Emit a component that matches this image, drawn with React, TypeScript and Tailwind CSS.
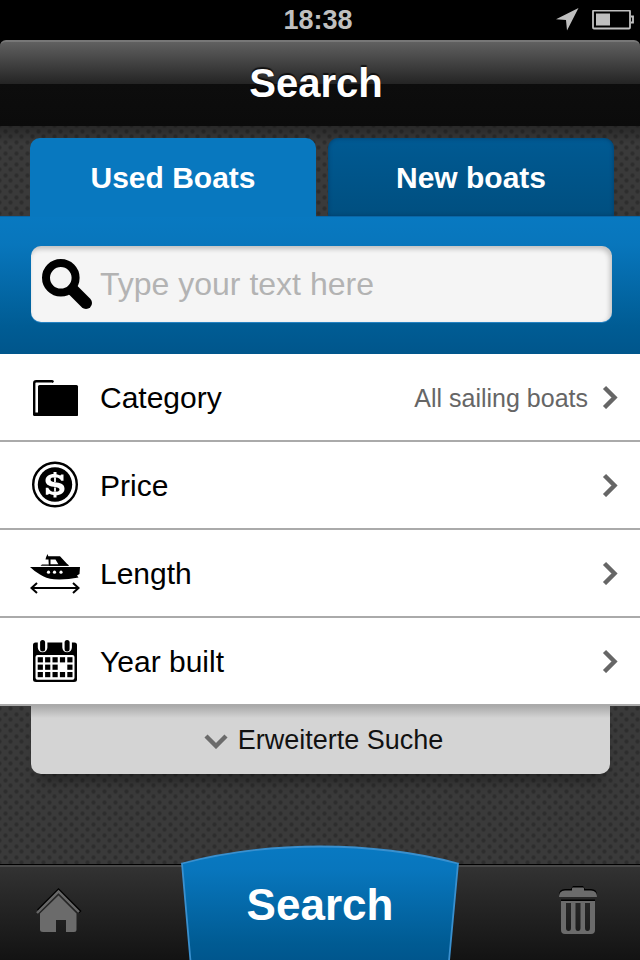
import React from "react";

function Chevron({ down = false }: { down?: boolean }) {
  return down ? (
    <svg className="h-4 w-6 shrink-0" viewBox="0 0 24 16" aria-hidden="true">
      <path d="M2 3 L12 13 L22 3" fill="none" stroke="#6b6b6b" strokeWidth="4.4" />
    </svg>
  ) : (
    <svg className="h-6 w-4 shrink-0" viewBox="0 0 16 24" aria-hidden="true">
      <path d="M2.500 2.500 L12.500 12.500 L2.500 22.500" fill="none" stroke="#666" strokeWidth="4.4" />
    </svg>
  );
}

function FolderIcon() {
  return (
    <svg className="h-[50px] w-[50px]" viewBox="0 0 50 50" aria-hidden="true">
      <path d="M4.200 42V11.200Q4.200 9.200 6.200 9.200H22L23.500 10" fill="none" stroke="#000" strokeWidth="2.400" />
      <rect x="3" y="40.500" width="45" height="3.500" rx="1.500" />
      <rect x="8" y="13" width="40" height="31" rx="1.500" />
    </svg>
  );
}

function PriceIcon() {
  return (
    <svg className="h-[50px] w-[50px]" viewBox="0 0 50 50" aria-hidden="true">
      <circle cx="25" cy="24.500" r="21.800" fill="none" stroke="#000" strokeWidth="2.400" />
      <circle cx="25" cy="24.500" r="17.200" />
      <path
        d="M33.500 14.500V20.800H31.200Q29.500 17.200 25 17.200Q20.500 17.200 20.500 19.600C20.500 21.500 22.500 22 26.500 22.500C32 23.200 34.500 25 34.500 28.700C34.500 32.800 31 35.200 25.500 35.200Q21.500 35.200 19 33.800L18 34.800H15.800V27.800H18.200Q20 32 25 32Q29.500 32 29.500 29.600C29.500 27.800 27.500 27.200 23.500 26.700C18 26 15.500 24 15.500 20.500C15.500 16.500 19 14 24 14Q28 14 30.300 15.600L31.200 14.500Z"
        fill="#fff"
      />
      <path d="M25 12V17.500M25 31.500V37.500" stroke="#fff" strokeWidth="3" />
      <path d="M25 17.500V22M25 27.500V31.500" stroke="#fff" strokeWidth="1.800" />
    </svg>
  );
}

function BoatIcon() {
  return (
    <svg className="h-[50px] w-[50px]" viewBox="0 0 50 50" aria-hidden="true">
      <path d="M0 19H50L49.500 26L47 27.500L48.500 29.500Q36 32 24 31.300Q16 30.500 10 26.500Q4 23 0 19Z" />
      <path d="M10.500 17.800L12 16.500H38L39 17.800Z" />
      <path
        fillRule="evenodd"
        d="M16.500 8.300L17.500 6L18.300 8.300H30L38.800 17.800H18.800L18.500 11.500H15.500L16 9.500ZM20.500 11.500V16.500H28.500L25.500 11.500Z"
      />
      <circle cx="18.500" cy="24.200" r="1.600" fill="#fff" />
      <circle cx="24.500" cy="24.200" r="1.600" fill="#fff" />
      <circle cx="31" cy="24.200" r="1.600" fill="#fff" />
      <path
        d="M1.500 40H48.500M7 35L1.500 40L7 45M43 35L48.500 40L43 45"
        fill="none"
        stroke="#000"
        strokeWidth="2"
      />
    </svg>
  );
}

function CalendarIcon() {
  const cells: React.ReactElement[] = [];
  for (let row = 0; row < 3; row++) {
    for (let col = 0; col < 5; col++) {
      if (row === 1 && col === 3) continue;
      cells.push(
        <rect key={`${row}-${col}`} x={7.700 + col * 7.400} y={21.200 + row * 7.400} width="5.200" height="5.200" />
      );
    }
  }
  return (
    <svg className="h-[50px] w-[50px]" viewBox="0 0 50 50" aria-hidden="true">
      <path
        fillRule="evenodd"
        d="M5.500 6.500H44.500Q47 6.500 47 9V43.500Q47 46 44 46H6Q3 46 3 43.500V9Q3 6.500 5.500 6.500ZM7.500 19Q5.500 19 5.500 21V41.800Q5.500 43.800 7.500 43.800H42.500Q44.500 43.800 44.500 41.800V21Q44.500 19 42.500 19Z"
      />
      <path d="M7.800 6V11.500A4.800 4.800 0 0 0 17.400 11.500V6ZM32.300 6V11.500A4.800 4.800 0 0 0 41.900 11.500V6Z" fill="#fff" />
      <rect x="10.100" y="4" width="5" height="11.500" rx="2.500" />
      <rect x="34.600" y="4" width="5" height="11.500" rx="2.500" />
      {cells}
    </svg>
  );
}

const rows = [
  { label: "Category", value: "All sailing boats", icon: <FolderIcon /> },
  { label: "Price", value: "", icon: <PriceIcon /> },
  { label: "Length", value: "", icon: <BoatIcon /> },
  { label: "Year built", value: "", icon: <CalendarIcon /> },
];

function StatusBar() {
  return (
    <div className="grid h-10 grid-cols-[1fr_auto_1fr] items-center bg-black pr-1 text-[#bfbfbf]">
      <span />
      <time className="text-[27px] leading-10 font-bold">18:38</time>
      <div className="flex items-center justify-end gap-3">
        <svg className="h-6 w-6" viewBox="0 0 24 24" fill="currentColor" aria-hidden="true">
          <path d="M22.500 0L11 22.500L10 12L0 11.200Z" />
        </svg>
        <svg className="h-5 w-[44px]" viewBox="0 0 44 20" aria-hidden="true">
          <rect x="1" y="0.500" width="37" height="18" rx="1" fill="none" stroke="currentColor" strokeWidth="1.800" />
          <rect x="4" y="3.500" width="14" height="12" fill="currentColor" />
          <path d="M39 6.500H41V12.500H39" fill="none" stroke="currentColor" strokeWidth="1.800" />
        </svg>
      </div>
    </div>
  );
}

function BottomBar() {
  return (
    <nav className="grid h-24 grid-cols-[1fr_278px_1fr] border-t border-black bg-linear-to-b from-[#333] to-[#131313] shadow-[inset_0_2px_0_#484848]">
      <button type="button" aria-label="Home" className="flex items-center pb-1 pl-9">
        <svg className="h-12 w-12" viewBox="0 0 48 48" aria-hidden="true">
          <path d="M2 23.500L22.500 3L44.500 25" fill="none" stroke="#000" strokeWidth="3" />
          <path d="M1 26L22.500 4.500L43 25" fill="none" stroke="#686868" strokeWidth="2.400" />
          <path
            d="M22.500 8.500L40.500 26.500V42.500Q40.500 45 38 45H30V33H20V45H7Q4 45 4 42.500V26.500Z"
            fill="#6b6b6b"
          />
        </svg>
      </button>
      <button type="button" className="relative text-[44px] font-bold text-white">
        <svg
          className="absolute bottom-0 left-0 h-[115px] w-full"
          viewBox="0 0 278 115"
          preserveAspectRatio="none"
          aria-hidden="true"
        >
          <defs>
            <linearGradient id="searchFill" x1="0" y1="0" x2="0" y2="1">
              <stop offset="0" stopColor="#0879c2" />
              <stop offset="0.200" stopColor="#0876bd" />
              <stop offset="0.850" stopColor="#005b93" />
              <stop offset="1" stopColor="#00568d" />
            </linearGradient>
          </defs>
          <path
            d="M9.500 116L1 18.500Q66 1.500 139 1.500Q212 1.500 277 18.500L268 116Z"
            fill="url(#searchFill)"
            stroke="#3990cf"
            strokeWidth="1.800"
          />
        </svg>
        <span className="relative block pb-4 leading-[64px]">Search</span>
      </button>
      <button type="button" aria-label="Delete" className="flex items-center justify-end pr-[38px] pb-2">
        <svg className="h-[52px] w-12" viewBox="0 0 48 52" aria-hidden="true">
          <path d="M5 12Q5 6 11 6H17L19 3H29L31 6H37Q43 6 43 12Z" fill="#000" />
          <path d="M5 14Q5 7.500 11 7.500H18V5.500Q18 4.500 19 4.500H29Q30 4.500 30 5.500V7.500H37Q43 7.500 43 14Z" fill="#6b6b6b" />
          <path d="M7 16.500H41V18H7Z" fill="#000" />
          <path
            fillRule="evenodd"
            d="M7 18H41V47Q41 51 37 51H11Q7 51 7 47ZM12 20V45Q12 48 14.500 48Q17 48 17 45V20ZM21.500 20V45Q21.500 48 24 48Q26.500 48 26.500 45V20ZM31 20V45Q31 48 33.500 48Q36 48 36 45V20Z"
            fill="#6b6b6b"
          />
        </svg>
      </button>
    </nav>
  );
}

export default function App() {
  return (
    <div className="flex min-h-screen flex-col bg-[#3a3a3a] font-['Liberation_Sans',Arial,sans-serif]">
      <StatusBar />
      <header className="bg-black">
        <h1 className="h-[86px] rounded-t-md border-t-2 border-[#777] bg-[linear-gradient(#606060,#242424_50%,#0d0d0d_50%,#0b0b0b)] pr-2 text-center text-[40px] leading-[82px] font-bold text-white text-shadow-[0_-2px_1px_#000000b0]">
          Search
        </h1>
      </header>
      <main className="flex flex-1 flex-col bg-[radial-gradient(circle_at_50%_50%,#2d2d2d_0_1px,transparent_3px),radial-gradient(circle_at_50%_50%,#2d2d2d_0_1px,transparent_3px)] bg-[size:11px_11px,11px_11px] bg-[position:0_0,5px_5px]">
        <div role="tablist" className="flex gap-3 bg-linear-to-b from-black/30 to-transparent to-20% pt-3 pr-[26px] pl-[30px]">
          <button
            role="tab"
            aria-selected="true"
            type="button"
            className="z-10 -mb-px h-[79px] flex-1 rounded-t-[10px] bg-[#0878bf] text-[30px] font-bold text-white"
          >
            Used Boats
          </button>
          <button
            role="tab"
            aria-selected="false"
            type="button"
            className="h-[78px] flex-1 rounded-t-[10px] bg-linear-to-b from-[#005a93] to-[#004f80] text-[30px] font-bold text-white shadow-[inset_0_0_4px_#003c6a]"
          >
            New boats
          </button>
        </div>
        <form
          className="border-t border-[#0a66a6] bg-[linear-gradient(#0879c1,#0876bc_20%,#005c94_80%,#00568c)] pt-[29px] pr-7 pb-8 pl-[31px]"
          onSubmit={(e) => e.preventDefault()}
        >
          <label className="flex h-[76px] items-center gap-2 rounded-[10px] bg-[#f5f5f5] pl-[11px] shadow-[inset_-2px_3px_5px_#00000038,0_1px_0_#2582c2]">
            <svg className="h-[50px] w-[50px] shrink-0" viewBox="0 0 50 50" aria-hidden="true">
              <circle cx="18.800" cy="18.800" r="14.800" fill="none" stroke="#000" strokeWidth="8" />
              <path d="M31 31L44 44" stroke="#000" strokeWidth="12" strokeLinecap="round" />
            </svg>
            <input
              type="search"
              aria-label="Search text"
              placeholder="Type your text here"
              className="min-w-0 flex-1 bg-transparent text-[32px] leading-10 text-black outline-none placeholder:text-[#b3b3b3]"
            />
          </label>
        </form>
        <ul className="bg-white">
          {rows.map((row) => (
            <li key={row.label} className="border-b-2 border-[#aaa]">
              <button type="button" className="flex h-[86px] w-full items-center pr-[22px] pl-[30px] text-left">
                {row.icon}
                <span className="flex-1 pl-5 text-[30px] text-black">{row.label}</span>
                <span className="pt-1 pr-[14px] text-[25px] text-[#666]">{row.value}</span>
                <Chevron />
              </button>
            </li>
          ))}
        </ul>
        <button
          type="button"
          className="mr-[30px] mb-[90px] ml-[31px] flex h-[68px] items-center justify-center gap-[10px] rounded-b-[10px] bg-[linear-gradient(#aaa,#d4d4d4_12px)] pt-px pl-1.5 text-[27px] text-[#111] shadow-[0_14px_14px_-8px_#00000060]"
        >
          <Chevron down />
          Erweiterte Suche
        </button>
      </main>
      <BottomBar />
    </div>
  );
}
